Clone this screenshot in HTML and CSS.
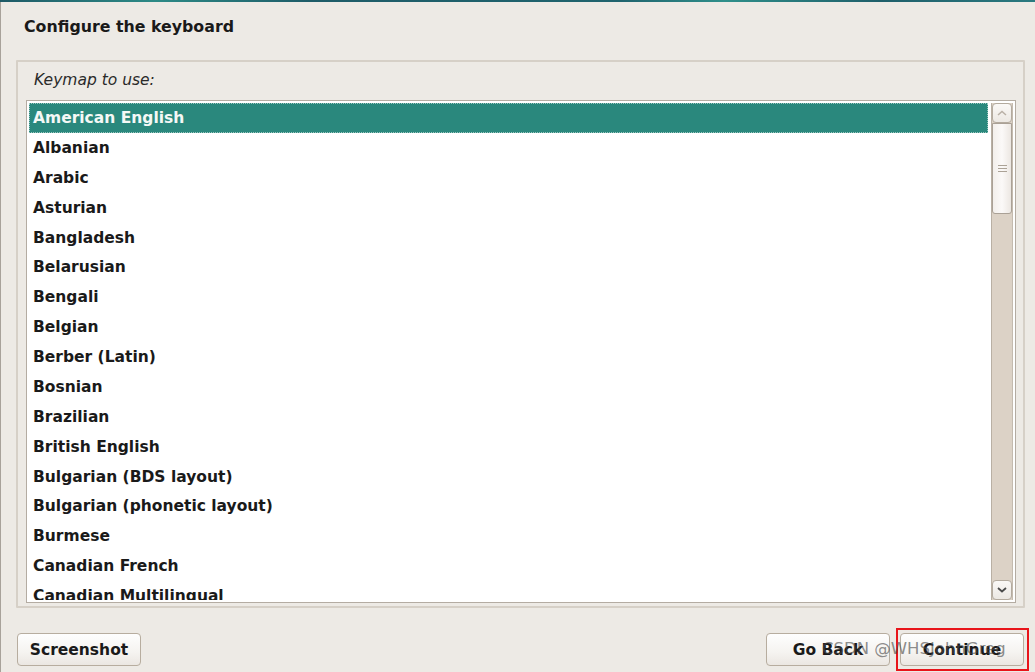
FILE: index.html
```html
<!DOCTYPE html>
<html>
<head>
<meta charset="utf-8">
<link rel="stylesheet" href="styles.css">
</head>
<body>
<div class="topline"></div>
<div class="page">
  <h1 class="title">Configure the keyboard</h1>
  <div class="frame">
    <div class="label">Keymap to use:</div>
    <div class="listbox">
      <ul class="list">
        <li class="item selected">American English</li>
        <li class="item">Albanian</li>
        <li class="item">Arabic</li>
        <li class="item">Asturian</li>
        <li class="item">Bangladesh</li>
        <li class="item">Belarusian</li>
        <li class="item">Bengali</li>
        <li class="item">Belgian</li>
        <li class="item">Berber (Latin)</li>
        <li class="item">Bosnian</li>
        <li class="item">Brazilian</li>
        <li class="item">British English</li>
        <li class="item">Bulgarian (BDS layout)</li>
        <li class="item">Bulgarian (phonetic layout)</li>
        <li class="item">Burmese</li>
        <li class="item">Canadian French</li>
        <li class="item">Canadian Multilingual</li>
      </ul>
      <div class="scrollbar">
        <div class="sb-btn">
          <svg width="12" height="8" viewBox="0 0 12 8"><path d="M2 6 L6 2.5 L10 6" fill="none" stroke="#b9b0a6" stroke-width="1.5"/></svg>
        </div>
        <div class="thumb">
          <span class="grip"></span><span class="grip"></span><span class="grip"></span>
        </div>
        <div class="trough"></div>
        <div class="sb-btn">
          <svg width="12" height="8" viewBox="0 0 12 8"><path d="M2 2 L6 5.5 L10 2" fill="none" stroke="#4a4a4a" stroke-width="1.8"/></svg>
        </div>
      </div>
    </div>
  </div>
  <div class="buttons">
    <button class="btn">Screenshot</button>
    <div class="spacer"></div>
    <button class="btn">Go Back</button>
    <div class="highlight-box"><button class="btn">Continue</button></div>
  </div>
</div>
<div class="watermark">CSDN @WHSJohnGreg</div>
</body>
</html>
```
FILE: styles.css
```css
html, body {
  margin: 0;
  padding: 0;
}
body {
  width: 1035px;
  height: 672px;
  overflow: hidden;
  background: #edeae5;
  font-family: "DejaVu Sans", sans-serif;
  color: #1a1a1a;
  position: relative;
}
.topline {
  height: 2px;
  background: linear-gradient(90deg, #1e5a66 0%, #2d8a86 15%, #1e5c68 30%, #20646e 60%, #2f8f8a 70%, #1f5f6a 85%, #2a7a80 100%);
}
.page {
  border-left: 1px solid #a8a29a;
  height: 670px;
  box-sizing: border-box;
  padding: 0 0 0 15px;
}
.title {
  margin: 0;
  padding: 15px 0 0 8px;
  height: 44px;
  box-sizing: border-box;
  font-size: 15.8px;
  font-weight: bold;
  color: #1a1a1a;
}
.frame {
  margin-top: 14px;
  width: 1009px;
  height: 548px;
  box-sizing: border-box;
  border: 2px solid #d6d0c7;
  border-radius: 1px;
  padding: 6px 8px 3px 8px;
}
.label {
  font-style: italic;
  font-size: 15.5px;
  color: #2a2a2a;
  padding-left: 8px;
  height: 32px;
  line-height: 24px;
}
.listbox {
  display: flex;
  width: 990px;
  height: 503px;
  box-sizing: border-box;
  border: 1px solid #b4aca2;
  background: #fff;
  padding: 2px 2px 2px 2px;
  overflow: hidden;
}
.list {
  list-style: none;
  margin: 0;
  padding: 0;
  flex: 1;
  overflow: hidden;
}
.item {
  height: 29.875px;
  line-height: 31px;
  padding-left: 4px;
  font-weight: bold;
  font-size: 15.5px;
  white-space: nowrap;
  color: #1a1a1a;
  box-sizing: border-box;
}
.item.selected {
  background: #2a887d;
  color: #f4f8f6;
  outline: 1px dotted #9cc7bf;
  outline-offset: -1px;
  margin-right: 1px;
}
.scrollbar {
  width: 22px;
  margin-left: 2px;
  display: flex;
  flex-direction: column;
  background: #dcd2c6;
  border-left: 1px solid #b9b0a4;
  border-right: 1px solid #c4bbaf;
  box-sizing: border-box;
}
.sb-btn {
  height: 20px;
  background: linear-gradient(180deg, #faf8f6, #ece8e3);
  border: 1px solid #b3aa9e;
  border-radius: 4px;
  display: flex;
  align-items: center;
  justify-content: center;
  box-sizing: border-box;
}
.thumb {
  height: 91px;
  background: linear-gradient(90deg, #f3efeb, #fbf9f8 50%, #ece7e2);
  border: 1px solid #aaa196;
  border-radius: 0 0 3px 3px;
  box-sizing: border-box;
  display: flex;
  flex-direction: column;
  align-items: center;
  justify-content: center;
  gap: 2px;
}
.grip {
  display: block;
  width: 9px;
  height: 1px;
  background: #aba296;
}
.trough {
  flex: 1;
}
.buttons {
  display: flex;
  align-items: center;
  margin-top: 20px;
  padding-left: 1px;
  width: 1012px;
}
.spacer { flex: 1; }
.btn {
  font-family: "DejaVu Sans", sans-serif;
  font-weight: bold;
  font-size: 15.5px;
  color: #1a1a1a;
  height: 33px;
  width: 124px;
  border: 1px solid #b7ad9f;
  border-radius: 4px;
  background: linear-gradient(180deg, #fefefe 0%, #f5f3f0 60%, #ebe7e2 100%);
  padding: 0;
}
.highlight-box {
  margin-left: 6px;
  border: 2px solid #e8141a;
  padding: 3px 3px 3px 2px;
  margin-top: 0;
}
.watermark {
  position: absolute;
  left: 822px;
  top: 639px;
  font-family: "DejaVu Sans", sans-serif;
  font-size: 16.5px;
  color: rgba(70, 70, 70, 0.62);
  white-space: nowrap;
}
```
